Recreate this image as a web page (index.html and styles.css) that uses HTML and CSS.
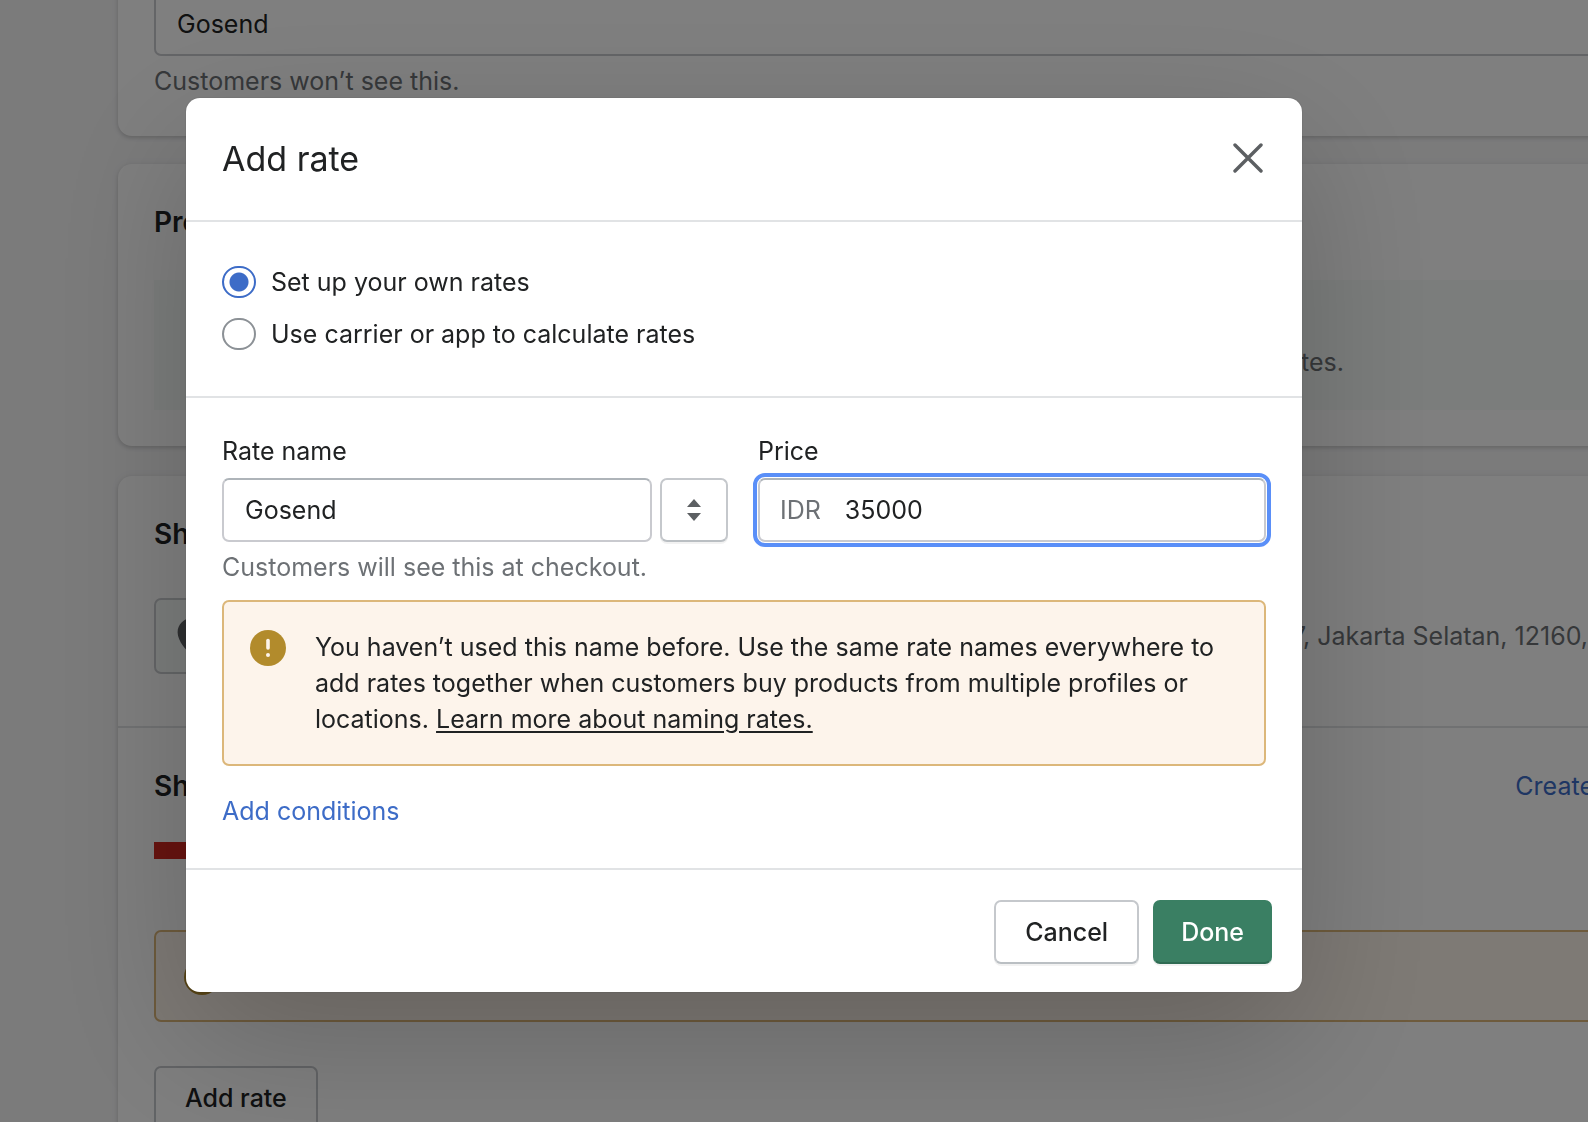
FILE: index.html
```html
<!DOCTYPE html>
<html lang="en">
<head>
<meta charset="utf-8">
<meta name="viewport" content="width=device-width, initial-scale=1">
<title>Add rate</title>
<link rel="stylesheet" href="styles.css">
</head>
<body>
<main class="page">
  <section class="card card-name">
    <input class="field" type="text" value="Gosend" aria-label="Profile name">
    <p class="help">Customers won’t see this.</p>
  </section>

  <section class="card card-products">
    <h2 class="card-title">Products</h2>
    <div class="info"><p class="info-text">rates.</p></div>
  </section>

  <section class="card card-shipping">
    <div class="card-part origin">
      <h2 class="card-title">Shipping from</h2>
      <div class="location">
        <span class="thumb">
          <svg width="36" height="36" viewBox="0 0 20 20" aria-hidden="true"><path fill="#5c5f62" fill-rule="evenodd" d="M10 0C5.600 0 2 3.500 2 7.900 2 13 7.300 18.400 9.200 19.700c.5.400 1.100.4 1.600 0C12.700 18.400 18 13 18 7.900 18 3.500 14.400 0 10 0zm0 11a3 3 0 1 1 0-6 3 3 0 0 1 0 6z"/></svg>
        </span>
        <p class="address">7, Jakarta Selatan, 12160,</p>
      </div>
    </div>
    <div class="card-part zones">
      <div class="zones-head">
        <h2 class="card-title">Shipping to</h2>
        <a class="link" href="#">Create</a>
      </div>
      <span class="flag"></span>
      <div class="banner banner-page">
        <svg class="banner-icon" width="36" height="36" viewBox="0 0 36 36" aria-hidden="true"><circle cx="18" cy="18" r="18" fill="#b28b2c"/></svg>
      </div>
      <button class="button button-zone" type="button">Add rate</button>
    </div>
  </section>
</main>

<div class="overlay">
  <form class="modal" role="dialog" aria-modal="true" aria-labelledby="modal-title">
    <header class="modal-header">
      <h1 class="modal-title" id="modal-title">Add rate</h1>
      <button class="close" type="button" aria-label="Close">
        <svg width="36" height="36" viewBox="0 0 36 36" aria-hidden="true"><path d="M5 4l26 26M31 4L5 30" fill="none" stroke="#5c5f62" stroke-width="3.400" stroke-linecap="round"/></svg>
      </button>
    </header>

    <div class="modal-section choices">
      <label class="choice"><input class="radio" type="radio" name="kind" checked>Set up your own rates</label>
      <label class="choice"><input class="radio" type="radio" name="kind">Use carrier or app to calculate rates</label>
    </div>

    <div class="modal-section details">
      <div class="fields">
        <div class="group">
          <label class="label" for="rate-name">Rate name</label>
          <div class="name-row">
            <input class="field" id="rate-name" type="text" value="Gosend">
            <button class="button picker" type="button" aria-label="Choose a rate name">
              <svg width="16" height="22" viewBox="0 0 16 22" aria-hidden="true"><path fill="#5c5f62" d="M8 0l7 8H1zM8 22l7-8H1z"/></svg>
            </button>
          </div>
          <p class="help">Customers will see this at checkout.</p>
        </div>
        <div class="group">
          <label class="label" for="price">Price</label>
          <div class="field price">
            <span class="prefix">IDR</span>
            <input class="price-input" id="price" type="text" value="35000">
          </div>
        </div>
      </div>

      <div class="banner">
        <svg class="banner-icon" width="36" height="36" viewBox="0 0 36 36" aria-hidden="true"><circle cx="18" cy="18" r="18" fill="#b28b2c"/><path d="M18 10.500v7.500" stroke="#fdf4eb" stroke-width="3.600" stroke-linecap="round"/><circle cx="18" cy="25" r="2" fill="#fdf4eb"/></svg>
        <p class="banner-text">You haven’t used this name before. Use the same rate names everywhere to add rates together when customers buy products from multiple profiles or locations. <a class="banner-link" href="#">Learn more about naming rates.</a></p>
      </div>

      <a class="link" href="#">Add conditions</a>
    </div>

    <footer class="modal-footer">
      <button class="button" type="button">Cancel</button>
      <button class="button button-primary" type="submit">Done</button>
    </footer>
  </form>
</div>
</body>
</html>
```

FILE: styles.css
```css
* {
  box-sizing: border-box;
}

body {
  margin: 0;
  height: 100vh;
  overflow: hidden;
  background: #f6f6f7;
  color: #202223;
  font: 400 25px/36px Inter, "Liberation Sans", sans-serif;
}

h1, h2, p {
  margin: 0;
}

input, button {
  font: inherit;
  color: inherit;
}

.link {
  color: #3d6cc7;
  text-decoration: none;
}

.help {
  margin-top: 7px;
  color: #6d7175;
}

.field {
  width: 100%;
  height: 64px;
  padding: 0 21px;
  border: 2px solid #c9cacf;
  border-top-color: #aeb4b9;
  border-radius: 7px;
  background: #fff;
}

.button {
  height: 64px;
  padding: 0 29px;
  border: 2px solid #c5c8cc;
  border-bottom-color: #babfc3;
  border-radius: 7px;
  background: #fff;
  box-shadow: 0 2px 0 rgba(0, 0, 0, 0.05);
  font-weight: 500;
}

.button-primary {
  padding: 0 26px;
  border-color: #3a7f63;
  border-bottom-color: #2f6b53;
  background: #3a7f63;
  color: #fff;
}

/* Page behind the dialog */

.page {
  display: flex;
  flex-direction: column;
  gap: 28px;
  margin: -8px -56px 0 0;
  padding-left: 118px;
}

.card {
  padding: 36px;
  border-radius: 14px;
  background: #fff;
  box-shadow: 0 0 9px rgba(23, 24, 24, 0.05), 0 2px 4px rgba(0, 0, 0, 0.15);
}

.card-name {
  padding-top: 0;
  padding-bottom: 37px;
  border-radius: 0 0 14px 14px;
}

.card-title {
  font-size: 28px;
  line-height: 44px;
  font-weight: 600;
}

.card-products .info {
  margin-top: 36px;
  padding: 64px 264px 30px 36px;
  background: #f6faf9;
  text-align: right;
}

.info-text,
.address {
  color: #6d7175;
}

.address {
  margin-right: 20px;
}

.card-shipping {
  margin-top: 2px;
  padding: 0;
}

.card-part {
  padding: 36px;
}

.location {
  display: flex;
  align-items: center;
  justify-content: space-between;
  margin-top: 42px;
  margin-bottom: 16px;
}

.thumb {
  display: grid;
  place-items: center;
  width: 76px;
  height: 76px;
  border: 2px solid #c9cccf;
  border-radius: 7px;
  background: #f6faf9;
}

.zones {
  border-top: 2px solid #e1e3e5;
}

.zones-head {
  display: flex;
  align-items: center;
  justify-content: space-between;
  padding-right: 14px;
}

.flag {
  display: block;
  width: 54px;
  height: 36px;
  margin-top: 34px;
  background: linear-gradient(#d0271f 0 17px, #fff 17px);
}

.banner {
  display: flex;
  align-items: flex-start;
  gap: 29px;
  padding: 27px 26px;
  border: 2px solid #dcb77a;
  border-radius: 7px;
  background: #fdf4eb;
}

.banner-icon {
  flex: none;
  margin-top: 1px;
}

.banner-page {
  align-items: center;
  height: 92px;
  margin-top: 52px;
  padding: 0 28px;
}

.button-zone {
  margin-top: 44px;
}

/* Dialog */

.overlay {
  position: fixed;
  inset: 0;
  padding: 98px 286px 0 186px;
  background: rgba(0, 0, 0, 0.5);
}

.modal {
  border-radius: 14px;
  background: #fff;
  box-shadow: 0 47px 144px rgba(0, 0, 0, 0.2), 0 0 2px rgba(0, 0, 0, 0.2);
}

.modal-header {
  display: flex;
  align-items: center;
  justify-content: space-between;
  padding: 36px;
}

.modal-title {
  font-size: 34px;
  line-height: 50px;
  font-weight: 400;
}

.close {
  display: grid;
  padding: 0;
  border: 0;
  background: none;
}

.modal-section,
.modal-footer {
  border-top: 2px solid #e1e3e5;
}

.choices {
  display: flex;
  flex-direction: column;
  gap: 16px;
  padding: 42px 36px 44px;
}

.choice {
  display: flex;
  align-items: center;
  gap: 15px;
}

.radio {
  appearance: none;
  width: 34px;
  height: 32px;
  margin: 0;
  border: 2px solid #8c9196;
  border-radius: 16px;
}

.radio:checked {
  border-color: #3d6cc7;
  background: radial-gradient(circle, #3d6cc7 9px, #fff 10px);
}

.details {
  padding: 35px 36px 39px;
}

.fields {
  display: grid;
  grid-template-columns: 506fr 508fr;
  gap: 30px;
}

.label {
  display: block;
  margin-bottom: 9px;
}

.name-row {
  display: flex;
  gap: 8px;
}

.picker {
  display: grid;
  place-items: center;
  flex: none;
  width: 68px;
  padding: 0;
}

.price {
  display: flex;
  align-items: center;
  gap: 24px;
  padding: 0 20px;
  outline: 4px solid #5a8ff8;
  outline-offset: 1px;
}

.price-input {
  flex: 1;
  min-width: 0;
  padding: 0;
  border: 0;
  outline: 0;
  background: none;
}

.prefix {
  color: #6d7175;
}

.details .banner {
  margin: 15px 0 27px;
}

.banner-link {
  color: inherit;
  text-decoration-thickness: 2px;
  text-underline-offset: 3px;
}

.modal-footer {
  display: flex;
  justify-content: flex-end;
  gap: 14px;
  padding: 30px 30px 28px;
}
```
